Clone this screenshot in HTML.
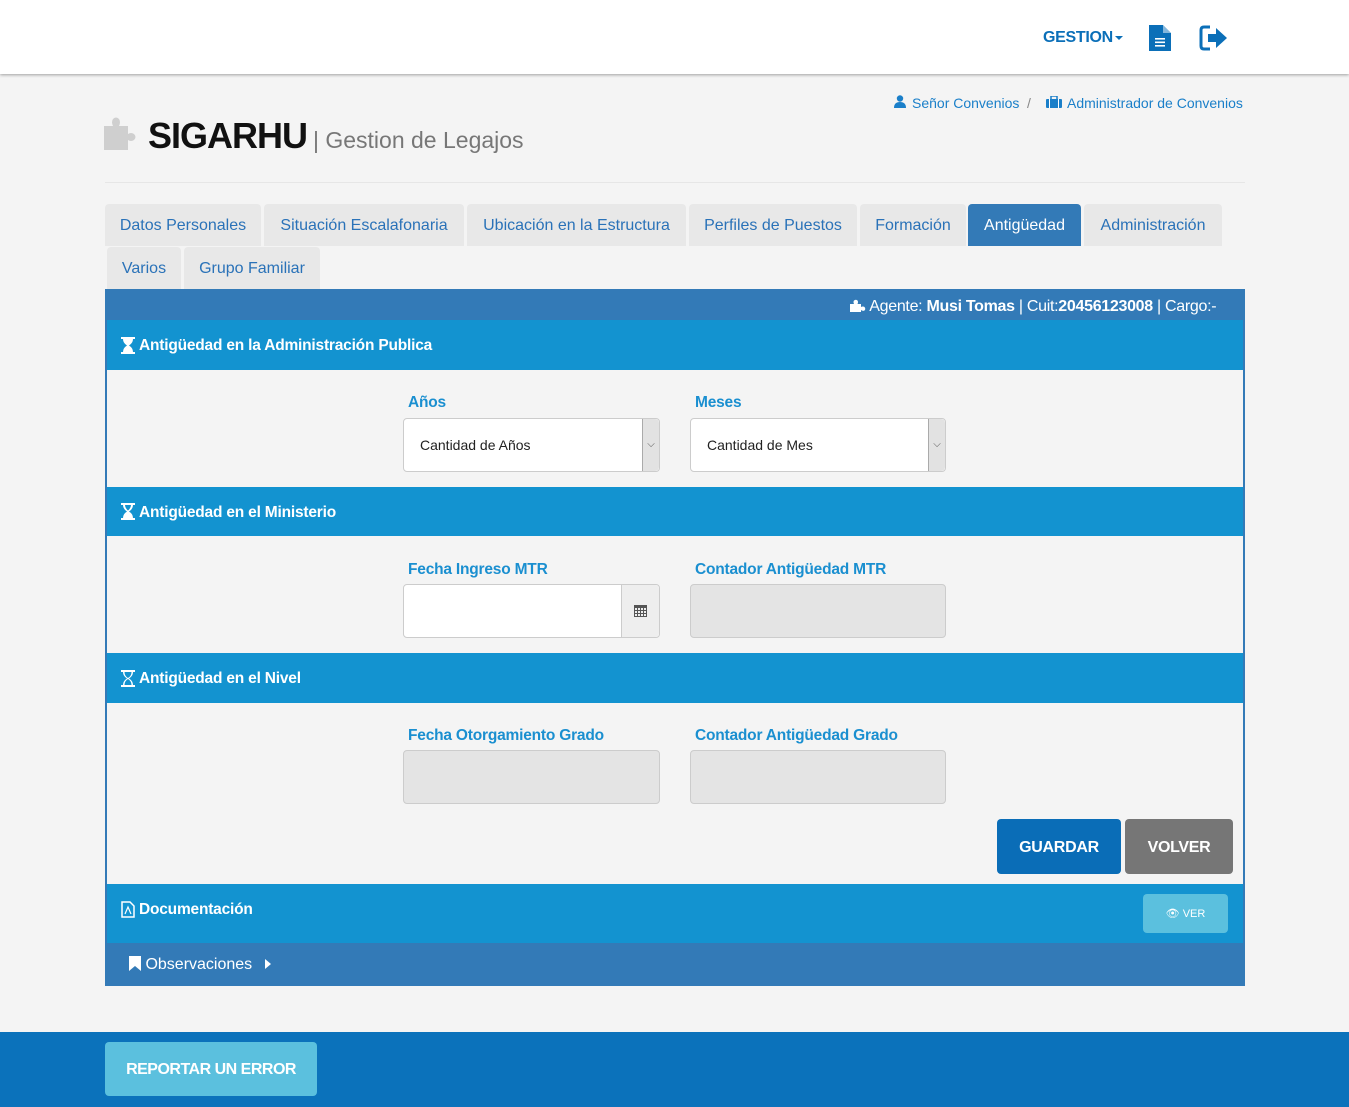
<!DOCTYPE html>
<html><head><meta charset="utf-8">
<style>
*{margin:0;padding:0;box-sizing:border-box}
body{width:1349px;height:1107px;background:#f4f4f4;font-family:"Liberation Sans",Arial,sans-serif;position:relative;overflow:hidden}
.a{position:absolute}
.nav{left:0;top:0;width:1349px;height:74px;background:#fff;box-shadow:0 1px 3px rgba(0,0,0,.35)}
.tab{position:absolute;height:42px;background:#e8e8e8;color:#2a72b8;font-size:16px;line-height:44px;text-align:center;border-radius:4px 4px 0 0}
.tab.act{background:#337ab7;color:#fff}
.sh{position:absolute;left:107px;width:1136px;background:#1393d0;color:#fff;font-weight:bold;font-size:15.5px;padding-left:32px;letter-spacing:-0.2px}
.sh svg{position:absolute;left:14px}
.lbl{position:absolute;color:#1a8fd0;font-weight:bold;font-size:15.5px;letter-spacing:-0.2px}
.inp{position:absolute;height:54px;background:#fff;border:1px solid #ccc;border-radius:4px}
.dis{background:#e4e4e4}
</style></head><body>
<div class="a nav"></div>
<div class="a" style="left:1043px;top:29px;color:#0b6fb8;font-weight:bold;font-size:16px;letter-spacing:-0.3px">GESTION<span style="display:inline-block;border-left:4px solid transparent;border-right:4px solid transparent;border-top:4px solid #0b6fb8;vertical-align:middle;margin-left:2px"></span></div>
<svg class="a" style="left:1149px;top:25px" width="22" height="26" viewBox="0 0 22 26"><path d="M0 0H14L22 8V26H0Z" fill="#0b6fb8"/><path d="M14 0V8H22" fill="#fff" opacity=".5"/><rect x="6" y="13" width="10" height="1.6" fill="#fff"/><rect x="6" y="16.5" width="10" height="1.6" fill="#fff"/><rect x="6" y="20" width="10" height="1.6" fill="#fff"/></svg>
<svg class="a" style="left:1199px;top:25px" width="30" height="26" viewBox="0 0 30 26"><path d="M11 2H5Q2 2 2 5V21Q2 24 5 24H11" fill="none" stroke="#0b6fb8" stroke-width="3"/><path d="M9 9H17V3L28 13L17 23V17H9Z" fill="#0b6fb8"/></svg>

<svg class="a" style="left:894px;top:95px" width="12" height="13" viewBox="0 0 12 13"><circle cx="6" cy="3.5" r="3.2" fill="#1a7fc9"/><path d="M0 13Q0 7 6 7Q12 7 12 13Z" fill="#1a7fc9"/></svg>
<div class="a" style="left:912px;top:95px;font-size:14px;color:#1a7fc9">Señor Convenios</div>
<div class="a" style="left:1027px;top:95px;font-size:14px;color:#888">/</div>
<svg class="a" style="left:1046px;top:96px" width="16" height="12" viewBox="0 0 16 12"><rect x="0" y="3" width="16" height="9" rx="1" fill="#1a7fc9"/><rect x="5" y="0" width="6" height="4" fill="none" stroke="#1a7fc9" stroke-width="1.5"/><rect x="3" y="3" width="1" height="9" fill="#fff"/><rect x="12" y="3" width="1" height="9" fill="#fff"/></svg>
<div class="a" style="left:1067px;top:95px;font-size:14px;color:#1a7fc9">Administrador de Convenios</div>

<svg class="a" style="left:104px;top:116px" width="36" height="34" viewBox="0 0 36 34"><path d="M0 10H9Q7 6 9 3Q12 0 15 3Q17 6 15 10H24V18Q27 16 30 18Q33 21 30 24Q27 26 24 24V34H0Z" fill="#cfcfcf"/></svg>
<div class="a" style="left:148px;top:115px;font-size:36px;font-weight:bold;color:#111;letter-spacing:-1px">SIGARHU</div>
<div class="a" style="left:313px;top:127px;font-size:23px;color:#777">| Gestion de Legajos</div>
<div class="a" style="left:105px;top:182px;width:1140px;height:1px;background:#e6e6e6"></div>

<div class="tab" style="left:105px;top:204px;width:156px">Datos Personales</div>
<div class="tab" style="left:264px;top:204px;width:200px">Situación Escalafonaria</div>
<div class="tab" style="left:467px;top:204px;width:219px">Ubicación en la Estructura</div>
<div class="tab" style="left:689px;top:204px;width:168px">Perfiles de Puestos</div>
<div class="tab" style="left:860px;top:204px;width:106px">Formación</div>
<div class="tab act" style="left:968px;top:204px;width:113px">Antigüedad</div>
<div class="tab" style="left:1084px;top:204px;width:138px">Administración</div>
<div class="tab" style="left:107px;top:247px;width:74px">Varios</div>
<div class="tab" style="left:184px;top:247px;width:136px">Grupo Familiar</div>

<div class="a" style="left:105px;top:289px;width:1140px;height:697px;background:#337ab7"></div>
<div class="a" style="left:107px;top:320px;width:1136px;height:623px;background:#f4f4f4"></div>
<div class="a" style="left:850px;top:298px;color:#fff;font-size:16px;white-space:nowrap;letter-spacing:-0.3px"><svg width="16" height="13" viewBox="0 0 16 13" style="vertical-align:-1px"><path d="M0 5H4Q3 3 4 1.5Q6 0 7.5 1.5Q8.5 3 7.5 5H11V8Q13 7 14.5 8Q16 10 14.5 11.5Q13 12.5 11 11V13H0Z" fill="#fff"/></svg> Agente: <b>Musi Tomas</b> | Cuit:<b>20456123008</b> | Cargo:-</div>

<div class="sh" style="top:320px;height:50px;line-height:52px"><svg style="top:17px" width="14" height="17" viewBox="0 0 14 17"><path d="M0 0H14V2H12Q12 6 8 8.5Q12 11 12 15H14V17H0V15H2Q2 11 6 8.5Q2 6 2 2H0Z" fill="#fff"/></svg>Antigüedad en la Administración Publica</div>
<div class="lbl" style="left:408px;top:394px">Años</div>
<div class="lbl" style="left:695px;top:394px">Meses</div>
<div class="inp" style="left:403px;top:418px;width:257px;font-size:14px;padding:18px 0 0 16px;color:#222">Cantidad de Años<div class="a" style="right:0;top:0;width:17px;height:52px;background:#e2e2e2;border-left:1px solid #aaa;border-radius:0 4px 4px 0;font-size:10px;text-align:center;line-height:52px;color:#555">⌵</div></div>
<div class="inp" style="left:690px;top:418px;width:256px;font-size:14px;padding:18px 0 0 16px;color:#222">Cantidad de Mes<div class="a" style="right:0;top:0;width:17px;height:52px;background:#e2e2e2;border-left:1px solid #aaa;border-radius:0 4px 4px 0;font-size:10px;text-align:center;line-height:52px;color:#555">⌵</div></div>

<div class="sh" style="top:487px;height:49px;line-height:51px"><svg style="top:16px" width="14" height="17" viewBox="0 0 14 17"><path d="M0 0H14V2H12Q12 6 8 8.5Q12 11 12 15H14V17H0V15H2Q2 11 6 8.5Q2 6 2 2H0Z M4 2Q4 5 7 7.5Q10 5 10 2Z" fill="#fff" fill-rule="evenodd"/></svg>Antigüedad en el Ministerio</div>
<div class="lbl" style="left:408px;top:561px">Fecha Ingreso MTR</div>
<div class="lbl" style="left:695px;top:561px">Contador Antigüedad MTR</div>
<div class="inp" style="left:403px;top:584px;width:257px"><div class="a" style="right:0;top:0;width:38px;height:52px;background:#eee;border-left:1px solid #ccc;border-radius:0 4px 4px 0"><svg style="position:absolute;left:12px;top:19px" width="13" height="13" viewBox="0 0 13 13"><rect x="0" y="1" width="13" height="12" fill="#555"/><g fill="#eee"><rect x="1" y="4" width="2" height="2"/><rect x="4" y="4" width="2" height="2"/><rect x="7" y="4" width="2" height="2"/><rect x="10" y="4" width="2" height="2"/><rect x="1" y="7" width="2" height="2"/><rect x="4" y="7" width="2" height="2"/><rect x="7" y="7" width="2" height="2"/><rect x="10" y="7" width="2" height="2"/><rect x="1" y="10" width="2" height="2"/><rect x="4" y="10" width="2" height="2"/><rect x="7" y="10" width="2" height="2"/><rect x="10" y="10" width="2" height="2"/></g></svg></div></div>
<div class="inp dis" style="left:690px;top:584px;width:256px"></div>

<div class="sh" style="top:653px;height:50px;line-height:52px"><svg style="top:17px" width="14" height="17" viewBox="0 0 14 17"><path d="M0 0H14V2H12Q12 6 8 8.5Q12 11 12 15H14V17H0V15H2Q2 11 6 8.5Q2 6 2 2H0Z M3.5 2Q3.5 6 7 8Q10.5 6 10.5 2Z M3.5 15Q3.5 11 7 9Q10.5 11 10.5 15Z" fill="#fff" fill-rule="evenodd"/></svg>Antigüedad en el Nivel</div>
<div class="lbl" style="left:408px;top:727px">Fecha Otorgamiento Grado</div>
<div class="lbl" style="left:695px;top:727px">Contador Antigüedad Grado</div>
<div class="inp dis" style="left:403px;top:750px;width:257px"></div>
<div class="inp dis" style="left:690px;top:750px;width:256px"></div>

<div class="a" style="left:997px;top:819px;width:124px;height:55px;background:#0a6db7;border-radius:4px;color:#fff;font-weight:bold;font-size:16px;text-align:center;line-height:57px;letter-spacing:-0.3px">GUARDAR</div>
<div class="a" style="left:1125px;top:819px;width:108px;height:55px;background:#767676;border-radius:4px;color:#fff;font-weight:bold;font-size:16px;text-align:center;line-height:57px;letter-spacing:-0.3px">VOLVER</div>

<div class="sh" style="top:884px;height:59px;line-height:52px"><svg style="top:17px" width="14" height="17" viewBox="0 0 14 17"><path d="M1 1H9L13 5V16H1Z" fill="none" stroke="#fff" stroke-width="1.5"/><path d="M4 13L7 6L10 13" fill="none" stroke="#fff" stroke-width="1.2"/></svg>Documentación</div>
<div class="a" style="left:1143px;top:894px;width:85px;height:39px;background:#5bc0de;border-radius:4px;color:#fff;font-size:11px;text-align:center;line-height:40px">👁 VER</div>

<div class="a" style="left:129px;top:956px;color:#fff;font-size:16px"><svg width="12" height="15" viewBox="0 0 12 15" style="vertical-align:-2px"><path d="M0 0H12V15L6 10L0 15Z" fill="#fff"/></svg> Observaciones <span style="display:inline-block;border-top:5px solid transparent;border-bottom:5px solid transparent;border-left:6px solid #fff;margin-left:8px"></span></div>

<div class="a" style="left:0;top:1032px;width:1349px;height:75px;background:#0b72bb"></div>
<div class="a" style="left:105px;top:1042px;width:212px;height:54px;background:#5bc0de;border-radius:4px;color:#fff;font-weight:bold;font-size:16px;text-align:center;line-height:56px;letter-spacing:-0.5px">REPORTAR UN ERROR</div>
</body></html>
